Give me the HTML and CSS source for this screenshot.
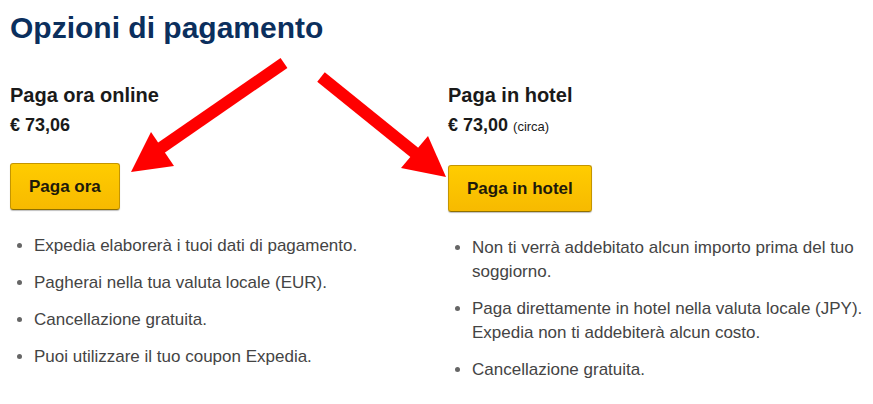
FILE: index.html
```html
<!DOCTYPE html>
<html lang="it">

<head>
    <meta charset="UTF-8">
    <meta name="viewport" content="width=device-width, initial-scale=1.0">
    <title>Opzioni di pagamento</title>
    <link rel="stylesheet" href="styles.css">
</head>

<body>
    <div class="page">
        <h1 class="title">Opzioni di pagamento</h1>

        <div class="options">
            <!-- Pagamento online -->
            <div class="option">
                <h2 class="option-name">Paga ora online</h2>
                <p class="price">€ 73,06</p>
                <button type="button" class="pay-button">Paga ora</button>
                <ul class="notes">
                    <li>Expedia elaborerà i tuoi dati di pagamento.</li>
                    <li>Pagherai nella tua valuta locale (EUR).</li>
                    <li>Cancellazione gratuita.</li>
                    <li>Puoi utilizzare il tuo coupon Expedia.</li>
                </ul>
            </div>

            <!-- Pagamento in hotel -->
            <div class="option">
                <h2 class="option-name">Paga in hotel</h2>
                <p class="price">€ 73,00 <span class="approx">(circa)</span></p>
                <button type="button" class="pay-button">Paga in hotel</button>
                <ul class="notes">
                    <li>Non ti verrà addebitato alcun importo prima del tuo soggiorno.</li>
                    <li>Paga direttamente in hotel nella valuta locale (JPY). Expedia non ti addebiterà alcun costo.</li>
                    <li>Cancellazione gratuita.</li>
                </ul>
            </div>
        </div>

        <!-- Frecce rosse sopra il contenuto -->
        <svg class="arrows" width="873" height="404" viewBox="0 0 873 404">
            <line x1="284" y1="63" x2="158" y2="150" stroke="#ff0000" stroke-width="12" />
            <polygon points="131,172 151,132 174,166" fill="#ff0000" />
            <line x1="321" y1="77" x2="420" y2="157" stroke="#ff0000" stroke-width="12" />
            <polygon points="446,177 428,136 401,168" fill="#ff0000" />
        </svg>
    </div>
</body>

</html>
```

FILE: styles.css
```css
body {
    margin: 0;
    font-family: "Liberation Sans", Arial, sans-serif;
    background-color: #ffffff;
}

.page {
    position: relative;
    padding: 9px 10px 0;
}

.title {
    margin: 0;
    font-size: 30px;
    line-height: 38px;
    font-weight: bold;
    color: #0b2f5d;
}

.options {
    display: grid;
    grid-template-columns: 438px 1fr;
    margin-top: 36px;
}

.option-name {
    margin: 0;
    font-size: 20px;
    line-height: 24px;
    font-weight: bold;
    color: #1a1a1a;
}

.price {
    margin: 6px 0 0;
    font-size: 18px;
    line-height: 24px;
    font-weight: bold;
    color: #1a1a1a;
}

.approx {
    font-size: 13px;
    font-weight: normal;
}

.pay-button {
    display: block;
    margin-top: 26px;
    height: 47px;
    padding: 0 18px;
    font-family: inherit;
    font-size: 17px;
    font-weight: bold;
    color: #1e1a0a;
    background: linear-gradient(#ffcc00, #f7ba00);
    border: 1px solid #c49500;
    border-bottom-color: #8f6f00;
    border-radius: 3px;
    box-shadow: 0 1px 1px rgba(0, 0, 0, 0.25);
    cursor: pointer;
}

.pay-button:hover {
    background: linear-gradient(#ffd633, #f5b000);
}

.notes {
    margin: 24px 0 0;
    padding: 0 0 0 24px;
    font-size: 17px;
    line-height: 24px;
    color: #444444;
}

.notes li {
    margin-bottom: 13px;
}

.notes li::marker {
    color: #666666;
}

.arrows {
    position: absolute;
    top: 0;
    left: 0;
    pointer-events: none;
}
```
